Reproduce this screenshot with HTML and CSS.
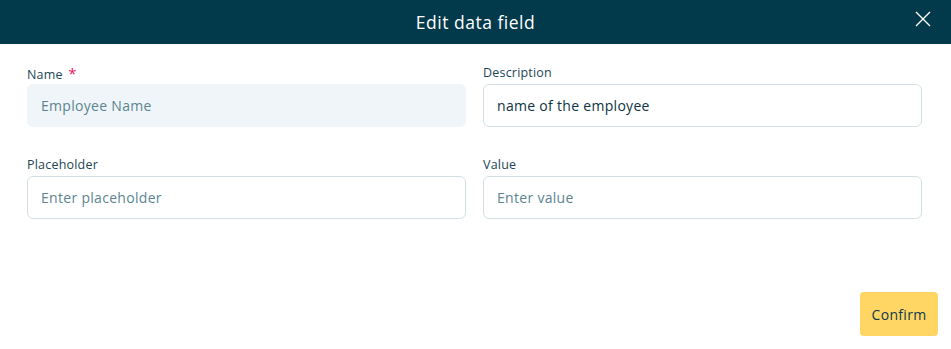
FILE: index.html
```html
<!DOCTYPE html>
<html lang="en">
<head>
    <link rel="stylesheet" href="styles.css">
    <title>Edit data field</title>
</head>
<body>
    <div class="modal">
        <div class="modal-header">
            <div class="modal-title">Edit data field</div>
            <button class="close-button" aria-label="Close">
                <svg width="16" height="16" viewBox="0 0 16 16">
                    <path d="M1 1 L15 15 M15 1 L1 15" stroke="#ffffff" stroke-width="1.4" fill="none"/>
                </svg>
            </button>
        </div>
        <div class="modal-body">
            <div class="field">
                <label class="label">Name <span class="required">*</span></label>
                <input class="input input-disabled" type="text" placeholder="Employee Name" disabled>
            </div>
            <div class="field">
                <label class="label">Description</label>
                <input class="input" type="text" value="name of the employee">
            </div>
            <div class="field">
                <label class="label">Placeholder</label>
                <input class="input" type="text" placeholder="Enter placeholder">
            </div>
            <div class="field">
                <label class="label">Value</label>
                <input class="input" type="text" placeholder="Enter value">
            </div>
        </div>
        <div class="modal-footer">
            <button class="confirm-button">Confirm</button>
        </div>
    </div>
</body>
</html>
```

FILE: styles.css
```css
body {
    margin: 0;
    background-color: #ffffff;
    font-family: "Open Sans", "Noto Sans", sans-serif;
}

.modal {
    display: flex;
    flex-direction: column;
    height: 349px;
}

.modal-header {
    position: relative;
    height: 44px;
    background-color: #023a4c;
    display: flex;
    align-items: center;
    justify-content: center;
}

.modal-title {
    color: #ffffff;
    font-size: 17.5px;
    font-weight: 500;
    letter-spacing: 0.5px;
}

.close-button {
    position: absolute;
    right: 20px;
    top: 11px;
    width: 16px;
    height: 16px;
    padding: 0;
    border: none;
    background: none;
    cursor: pointer;
}

.close-button svg {
    display: block;
}

.modal-body {
    display: grid;
    grid-template-columns: 1fr 1fr;
    column-gap: 17px;
    row-gap: 29px;
    padding: 20px 29px 0 27px;
}

.field {
    display: flex;
    flex-direction: column;
}

.label {
    font-size: 12.5px;
    color: #1c4655;
    height: 20px;
    line-height: 18px;
    letter-spacing: 0.2px;
}

.required {
    color: #e8175d;
    font-size: 15px;
    margin-left: 2px;
}

.input {
    box-sizing: border-box;
    height: 43px;
    border: 1px solid #d3e0e3;
    border-radius: 6px;
    padding: 0 13px;
    font-family: inherit;
    font-size: 14px;
    letter-spacing: 0.3px;
    color: #0d3444;
    background-color: #ffffff;
    outline: none;
}

.input::placeholder {
    color: #5c858f;
}

.input-disabled {
    background-color: #eff5f8;
    border-color: #eff5f8;
}

.modal-footer {
    margin-top: auto;
    display: flex;
    justify-content: flex-end;
    padding: 0 13px 13px 0;
}

.confirm-button {
    height: 44px;
    width: 78px;
    border: none;
    border-radius: 4px;
    background-color: #ffd664;
    color: #0c3a4c;
    font-family: inherit;
    font-size: 14px;
    letter-spacing: 0.3px;
    cursor: pointer;
}
```
